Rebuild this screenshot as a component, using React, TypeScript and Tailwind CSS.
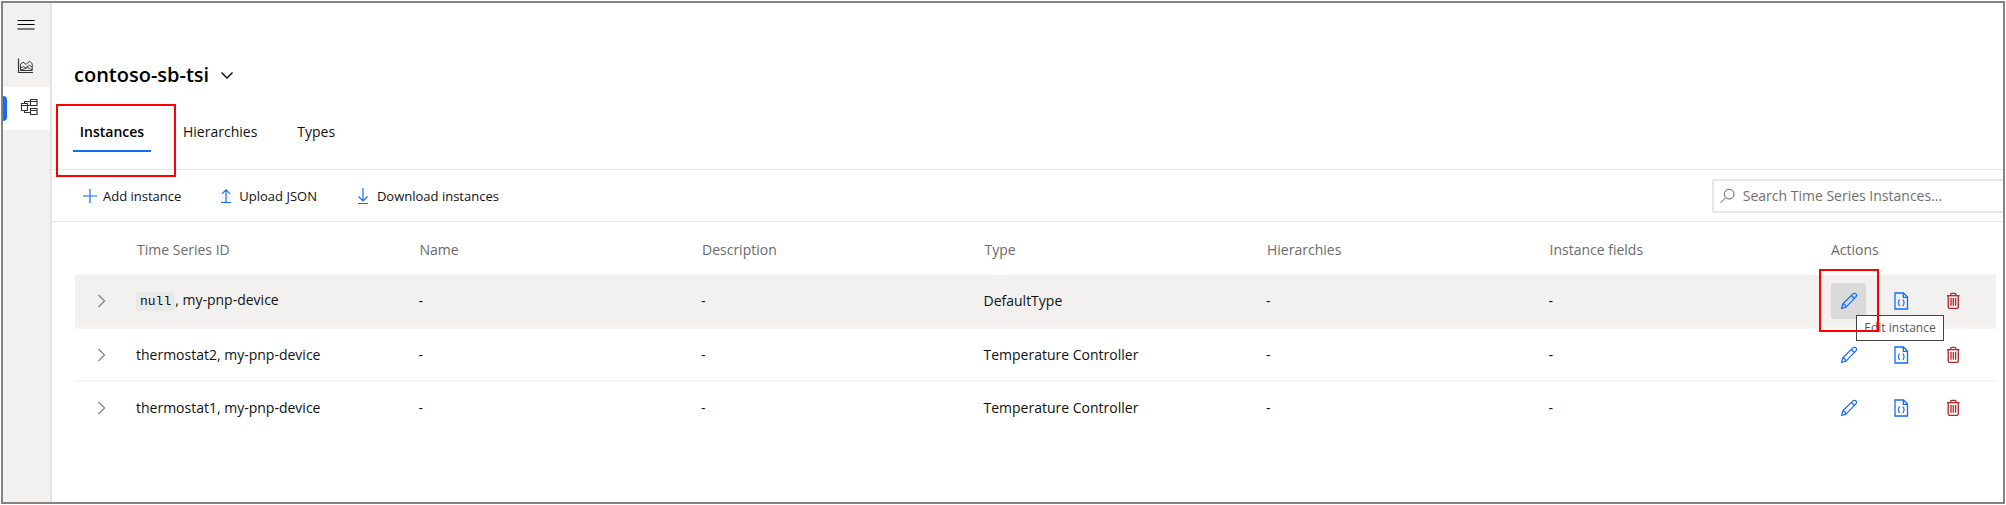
import type { ReactNode } from "react";

type Instance = { id: string; hasNull?: boolean; type: string; active?: boolean };

const instances: Instance[] = [
  { id: "my-pnp-device", hasNull: true, type: "DefaultType", active: true },
  { id: "thermostat2, my-pnp-device", type: "Temperature Controller" },
  { id: "thermostat1, my-pnp-device", type: "Temperature Controller" },
];

const headings = ["Time Series ID", "Name", "Description", "Type", "Hierarchies", "Instance fields"];

function Icon({ size = 16, className = "", children }: { size?: number; className?: string; children: ReactNode }) {
  return (
    <svg width={size} height={size} viewBox={`0 0 ${size} ${size}`} fill="none" stroke="currentColor" aria-hidden="true" className={className}>
      {children}
    </svg>
  );
}

function MenuIcon() {
  return (
    <Icon size={18}>
      <path d="M0.5 4.5h17M0.5 8.5h17M0.5 13h17" strokeWidth="1.2" />
    </Icon>
  );
}

function ChartIcon() {
  return (
    <Icon size={16}>
      <path d="M1.5 0.5v14h14.5" strokeWidth="1.2" />
      <path d="M3.5 12.5V6.2l2.6-2 3 2.2 3.6-3.2 2.5 2.6v6.7z" strokeWidth="1" />
      <path d="M3.5 9.8l3-1.2 2.2 1.2 3.6-2.6 2.9 2M3.5 12.3l4.5-1.8 3-1 4.2 2.6" strokeWidth="0.9" />
    </Icon>
  );
}

function ModelIcon() {
  return (
    <Icon size={18}>
      <g strokeWidth="1.1">
        <path d="M1.5 5.5h6v7h-6zM1.5 7.5h6" />
        <path d="M10.5 1.5h6.5v6h-6.5zM10.5 3.5h6.5" />
        <path d="M10.5 10.5h6.5v6h-6.5zM10.5 12.5h6.5" />
        <path d="M4.5 5.5v-2h6M4.5 12.5v2h6M7.5 7.5h3" />
      </g>
    </Icon>
  );
}

function PencilIcon() {
  return (
    <Icon size={18}>
      <g strokeWidth="1.2" strokeLinejoin="round">
        <path d="M1.5 16.5l1.4-4.7L13 1.9q1.5-1.2 2.9 0t0 3L6 15.1z" />
        <path d="M11.4 3.5l3 3M2.9 11.8q2.5.5 3.1 3.3" />
      </g>
    </Icon>
  );
}

function JsonIcon() {
  return (
    <Icon size={18}>
      <path d="M3 1h8.5l4 4v12H3z" strokeWidth="1.3" />
      <path d="M11.3 1v4.3h4.2" strokeWidth="1.3" />
      <path d="M7.9 7.8q-1.2 0-1.1 1.2v.8q0 .8-.9.9.9.1.9.9v.8q-.1 1.2 1.1 1.2M10.6 7.8q1.2 0 1.1 1.2v.8q0 .8.9.9-.9.1-.9.9v.8q.1 1.2-1.1 1.2" strokeWidth="1.1" />
    </Icon>
  );
}

function TrashIcon() {
  return (
    <Icon size={18}>
      <g strokeWidth="1.3">
        <path d="M3 3.7h12.5" />
        <path d="M6.5 3.5q0-2.2 1.3-2.2h3q1.2 0 1.2 2.2" />
        <path d="M4.2 3.8v11.2q0 1.4 1.4 1.4h7.3q1.4 0 1.4-1.4V3.8" />
        <path d="M7 6v7.7M9.3 6v7.7M11.6 6v7.7" />
      </g>
    </Icon>
  );
}

function ChevronRight() {
  return (
    <Icon size={14} className="text-[#808080]">
      <path d="M4.5 1l6 6-6 6" strokeWidth="1.2" />
    </Icon>
  );
}

function Marker({ className }: { className: string }) {
  return <span aria-hidden="true" className={`pointer-events-none absolute z-20 border-2 border-[#fe0000] ${className}`} />;
}

function Sidebar() {
  return (
    <nav aria-label="Main" className="flex w-[49px] shrink-0 flex-col border-r-2 border-[#e4e4e4] bg-[#f2f1f0] text-[#333]">
      <button aria-label="Menu" className="flex h-[42px] items-center justify-center pt-0.5 pr-px text-black">
        <MenuIcon />
      </button>
      <button aria-label="Analyze" className="flex h-[42px] items-center justify-center pr-1">
        <ChartIcon />
      </button>
      <button aria-label="Model" className="flex h-[43px] items-center bg-white">
        <span className="h-[25px] w-1 rounded-r-sm bg-[#136bfb]" />
        <span className="flex flex-1 justify-center pb-1">
          <ModelIcon />
        </span>
      </button>
    </nav>
  );
}

function Row({ item }: { item: Instance }) {
  return (
    <tr className={`h-[53px] border-b-2 border-[#f6f6f6] last:border-transparent ${item.active ? "bg-[#f2f1f0]" : ""}`}>
      <td>
        <button aria-label="Expand row" className="flex w-full justify-center pr-0.5">
          <ChevronRight />
        </button>
      </td>
      <td className="px-2">
        {item.hasNull && <code className="rounded bg-[#e9e9e8] px-1 py-0.5 font-['Liberation_Mono',monospace] text-[13px]">null</code>}
        {item.hasNull && ", "}
        {item.id}
      </td>
      <td className="px-2">-</td>
      <td className="px-2">-</td>
      <td className="px-2">{item.type}</td>
      <td className="px-2">-</td>
      <td className="px-2">-</td>
      <td className="px-2">
        <div className="flex gap-[17px] text-[#136bfb]">
          <div className="relative">
            <button
              aria-label="Edit instance"
              className={`flex h-9 w-[35px] items-center justify-center rounded-xs ${item.active ? "bg-[#dadada]" : ""}`}
            >
              <PencilIcon />
            </button>
            {item.active && (
              <>
                <span role="tooltip" className="absolute top-8 left-[25px] z-10 flex h-[26px] w-[88px] items-center justify-center border border-[#444] bg-white text-[12px] whitespace-nowrap text-[#575757]">
                  Edit instance
                </span>
                <Marker className="-top-3.5 -left-3 h-[63px] w-[60px]" />
              </>
            )}
          </div>
          <button aria-label="View JSON" className="flex h-9 w-[35px] items-center justify-center">
            <JsonIcon />
          </button>
          <button aria-label="Delete instance" className="flex h-9 w-[35px] items-center justify-center text-[#b1252b]">
            <TrashIcon />
          </button>
        </div>
      </td>
    </tr>
  );
}

export default function App() {
  return (
    <div className="flex min-h-screen bg-white p-px font-['Open_Sans','Noto_Sans',sans-serif] text-[14px] leading-5 text-[#111]">
      <div className="flex flex-1 overflow-hidden border-2 border-[#848484]">
        <Sidebar />
        <main className="min-w-0 flex-1">
          <header className="px-[22px] pt-[58px]">
            <button className="flex items-center gap-[11px] text-[20px] leading-7 font-semibold text-black">
              contoso-sb-tsi
              <Icon size={14}>
                <path d="M1.5 4.5l5.5 5.5 5.5-5.5" strokeWidth="1.3" />
              </Icon>
            </button>
          </header>
          <div role="tablist" className="flex items-start gap-6 border-b border-[#e6e6e6] px-[21px] pt-8 pb-[17px]">
            <div className="relative">
              <button role="tab" aria-selected="true" className="h-[31px] w-[78px] border-b-2 border-[#136bfb] pb-2 font-semibold text-black">
                Instances
              </button>
              <Marker className="-top-[17px] -left-[17px] h-[73px] w-[120px]" />
            </div>
            <button role="tab" aria-selected="false" className="h-[31px] border-b-2 border-transparent px-2 pb-2">Hierarchies</button>
            <button role="tab" aria-selected="false" className="h-[31px] border-b-2 border-transparent px-2 pb-2">Types</button>
          </div>
          <div className="flex h-[52px] items-center justify-between border-b border-[#e6e6e6] pl-[31px]">
            <div className="flex items-center gap-[38px] text-[13px]">
              <button className="flex items-center gap-1.5">
                <Icon size={14} className="text-[#136bfb]">
                  <path d="M7 0v14M0 7h14" strokeWidth="1.2" />
                </Icon>
                Add instance
              </button>
              <button className="flex items-center gap-1.5">
                <Icon size={14} className="text-[#136bfb]">
                  <path d="M7 13V0.8M3 4.8l4-4 4 4M2 13.5h10" strokeWidth="1.2" />
                </Icon>
                Upload JSON
              </button>
              <button className="flex items-center gap-1.5">
                <Icon size={16} className="text-[#136bfb]">
                  <path d="M8 0v12.5M3.5 8.5l4.5 4.5 4.5-4.5M3 15.5h10" strokeWidth="1.2" />
                </Icon>
                Download instances
              </button>
            </div>
            <label className="flex h-[34px] w-[291px] items-center gap-2 rounded-l-xs border-2 border-r-0 border-[#e6e6e6] pl-1.5 text-[#555]">
              <Icon size={16}>
                <circle cx="10" cy="6" r="5.3" />
                <path d="M6.2 9.8L0.5 15.5" />
              </Icon>
              <input
                type="search"
                aria-label="Search Time Series Instances"
                placeholder="Search Time Series Instances..."
                className="w-full min-w-0 bg-transparent outline-none placeholder:text-[#707070]"
              />
            </label>
          </div>
          <div className="pr-[7px] pl-[23px]">
            <table className="w-full table-fixed border-collapse text-left">
              <colgroup>
                <col className="w-[53px]" />
                <col />
                <col />
                <col />
                <col />
                <col />
                <col />
                <col className="w-[173px]" />
              </colgroup>
              <thead>
                <tr className="h-[53px] text-[#6b6b6b]">
                  <th aria-label="Expand" />
                  {headings.map((h) => (
                    <th key={h} scope="col" className="pt-0.5 pr-2 pl-[9px] font-normal">{h}</th>
                  ))}
                  <th scope="col" className="px-2 pt-0.5 font-normal">Actions</th>
                </tr>
              </thead>
              <tbody>
                {instances.map((item) => (
                  <Row key={item.id} item={item} />
                ))}
              </tbody>
            </table>
          </div>
        </main>
      </div>
    </div>
  );
}
